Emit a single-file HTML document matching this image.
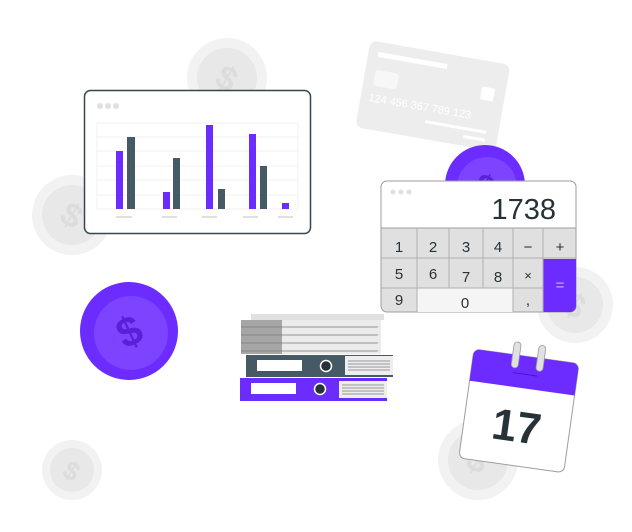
<!DOCTYPE html>
<html><head><style>body{margin:0;background:#fff}svg{display:block}</style></head><body>
<svg width="632" height="532" viewBox="0 0 632 532" xmlns="http://www.w3.org/2000/svg" font-family="Liberation Sans, sans-serif">
<!-- gray coins -->
<g fill="#f2f2f2"><circle cx="227" cy="78" r="40"/><circle cx="72" cy="215" r="40"/><circle cx="575" cy="305" r="38"/><circle cx="72" cy="470" r="30"/><circle cx="478" cy="460" r="40"/></g>
<g fill="#e8e8e8"><circle cx="227" cy="78" r="30"/><circle cx="72" cy="215" r="30"/><circle cx="575" cy="305" r="28"/><circle cx="72" cy="470" r="22"/><circle cx="478" cy="460" r="30"/></g>
<g fill="#dcdcdc" font-size="34" font-weight="bold" text-anchor="middle"><text x="227" y="90" transform="rotate(30 227 78)">$</text><text x="72" y="227" transform="rotate(30 72 215)">$</text><text x="575" y="317" transform="rotate(30 575 305)">$</text><text x="72" y="480" font-size="26" transform="rotate(30 72 470)">$</text><text x="478" y="472" transform="rotate(30 478 460)">$</text></g>
<!-- card -->
<g transform="rotate(10 433 95)"><rect x="362" y="52" width="142" height="88" rx="7" fill="#ededed"/><rect x="372" y="62" width="70" height="5" fill="#fff"/><rect x="372" y="80" width="24" height="16" rx="3" fill="#f7f7f7"/><rect x="480" y="78" width="13" height="13" rx="2" fill="#fff"/><text x="370" y="112" fill="#fff" font-size="11">124 456 367 789 123</text><rect x="430" y="121" width="62" height="3" fill="#fff"/><rect x="470" y="129" width="22" height="3" fill="#fff"/></g>
<!-- chart window -->
<rect x="84.5" y="90.5" width="226" height="143" rx="6" fill="#fff" stroke="#37474f" stroke-width="1.5"/>
<g fill="#e0e0e0"><circle cx="100" cy="106" r="3"/><circle cx="108" cy="106" r="3"/><circle cx="116" cy="106" r="3"/></g>
<g stroke="#f0f0f0" stroke-width="1"><line x1="97" y1="123" x2="298" y2="123"/><line x1="97" y1="137" x2="298" y2="137"/><line x1="97" y1="151" x2="298" y2="151"/><line x1="97" y1="166" x2="298" y2="166"/><line x1="97" y1="180" x2="298" y2="180"/><line x1="97" y1="195" x2="298" y2="195"/><line x1="97" y1="209" x2="298" y2="209"/><line x1="97" y1="123" x2="97" y2="209"/><line x1="298" y1="123" x2="298" y2="209"/></g>
<g fill="#6c2bff"><rect x="116" y="151" width="7" height="58"/><rect x="163" y="192" width="7" height="17"/><rect x="206" y="125" width="7" height="84"/><rect x="249" y="134" width="7" height="75"/><rect x="282" y="203" width="7" height="6"/></g>
<g fill="#455a64"><rect x="127" y="137" width="8" height="72"/><rect x="173" y="158" width="7" height="51"/><rect x="218" y="189" width="7" height="20"/><rect x="260" y="166" width="7" height="43"/></g>
<g fill="#e0e0e0"><rect x="116" y="216" width="16" height="2"/><rect x="162" y="216" width="15" height="2"/><rect x="202" y="216" width="15" height="2"/><rect x="243" y="216" width="15" height="2"/><rect x="278" y="216" width="15" height="2"/></g>
<!-- purple coin behind calc -->
<circle cx="485" cy="185" r="40" fill="#6c2bff"/><circle cx="487" cy="187" r="30" fill="#7c44ff"/><text x="485" y="197" fill="#5a20d8" font-size="32" font-weight="bold" text-anchor="middle" transform="rotate(25 485 185)">$</text>
<!-- calculator -->
<rect x="381" y="181" width="195" height="131" rx="6" fill="#e0e0e0" stroke="#9e9e9e"/>
<path d="M387 181h183a6 6 0 0 1 6 6v41h-195v-41a6 6 0 0 1 6-6z" fill="#fff" stroke="#9e9e9e"/>
<g fill="#e0e0e0"><circle cx="393" cy="192" r="2.5"/><circle cx="401" cy="192" r="2.5"/><circle cx="409" cy="192" r="2.5"/></g>
<text x="556" y="219" font-size="29" fill="#263238" text-anchor="end" font-weight="300">1738</text>
<rect x="417" y="288" width="96" height="24" fill="#f5f5f5"/>
<path d="M543 259h33v47a6 6 0 0 1-6 6h-27z" fill="#6c2bff"/>
<g stroke="#b0b0b0" stroke-width="1"><line x1="381" y1="258" x2="543" y2="258"/><line x1="381" y1="288" x2="543" y2="288"/><line x1="543" y1="258" x2="576" y2="258"/><line x1="417" y1="228" x2="417" y2="312"/><line x1="449" y1="228" x2="449" y2="288"/><line x1="483" y1="228" x2="483" y2="288"/><line x1="513" y1="228" x2="513" y2="312"/><line x1="543" y1="228" x2="543" y2="312"/></g>
<g font-size="15" fill="#263238" text-anchor="middle"><text x="399" y="252">1</text><text x="433" y="252">2</text><text x="466" y="252">3</text><text x="498" y="252">4</text><text x="528" y="252">−</text><text x="560" y="252">+</text><text x="399" y="279">5</text><text x="433" y="279">6</text><text x="466" y="282">7</text><text x="498" y="282">8</text><text x="528" y="280" font-size="13">×</text><text x="399" y="305">9</text><text x="465" y="308">0</text><text x="528" y="305">,</text><text x="560" y="290" fill="#c8b6ff">=</text></g>
<!-- big purple coin -->
<circle cx="129" cy="331" r="49" fill="#6c2bff"/><circle cx="131" cy="333" r="37" fill="#7c44ff"/><text x="129" y="346" fill="#5a20d8" font-size="42" font-weight="bold" text-anchor="middle" transform="rotate(-25 129 331)">$</text>
<!-- paper stack -->
<rect x="251" y="314" width="133" height="6" fill="#e0e0e0"/>
<rect x="241" y="320" width="140" height="34" fill="#ebebeb"/>
<rect x="241" y="320" width="41" height="34" fill="#a6a6a6"/>
<g stroke="#7a7a7a" stroke-width="0.8"><line x1="241" y1="327" x2="378" y2="327"/><line x1="241" y1="335" x2="378" y2="335"/><line x1="241" y1="343" x2="378" y2="343"/><line x1="241" y1="351" x2="378" y2="351"/></g>
<!-- dark binder -->
<rect x="246" y="355" width="147" height="22" fill="#455a64"/>
<rect x="345" y="356" width="48" height="19" fill="#eee"/>
<g stroke="#777" stroke-width="0.8"><line x1="348" y1="361" x2="390" y2="361"/><line x1="348" y1="364" x2="390" y2="364"/><line x1="348" y1="367" x2="390" y2="367"/><line x1="348" y1="370" x2="390" y2="370"/></g>
<rect x="257" y="360" width="45" height="11" fill="#fff"/>
<circle cx="326" cy="366" r="5.5" fill="#263238" stroke="#fff" stroke-width="1.5"/>
<!-- purple binder -->
<rect x="240" y="378" width="147" height="23" fill="#6c2bff"/>
<rect x="339" y="381" width="48" height="17" fill="#eee"/>
<g stroke="#777" stroke-width="0.8"><line x1="342" y1="385" x2="384" y2="385"/><line x1="342" y1="388" x2="384" y2="388"/><line x1="342" y1="391" x2="384" y2="391"/><line x1="342" y1="394" x2="384" y2="394"/></g>
<rect x="251" y="383" width="45" height="11" fill="#fff"/>
<circle cx="320" cy="389" r="5.5" fill="#263238" stroke="#fff" stroke-width="1.5"/>
<!-- calendar -->
<g transform="rotate(8 520 410)">
<rect x="466" y="356" width="106" height="110" rx="6" fill="#fff" stroke="#9e9e9e"/>
<path d="M472 356h94a6 6 0 0 1 6 6v26h-106v-26a6 6 0 0 1 6-6z" fill="#6c2bff"/>
<line x1="508" y1="374" x2="532" y2="374" stroke="#4a18c0"/>
<rect x="505" y="343" width="7" height="26" rx="3.5" fill="#e0e0e0" stroke="#999" stroke-width="0.8"/>
<rect x="530" y="343" width="7" height="26" rx="3.5" fill="#e0e0e0" stroke="#999" stroke-width="0.8"/>
<text x="519" y="442" font-size="44" font-weight="bold" fill="#263238" text-anchor="middle">17</text>
</g>
</svg>
</body></html>
